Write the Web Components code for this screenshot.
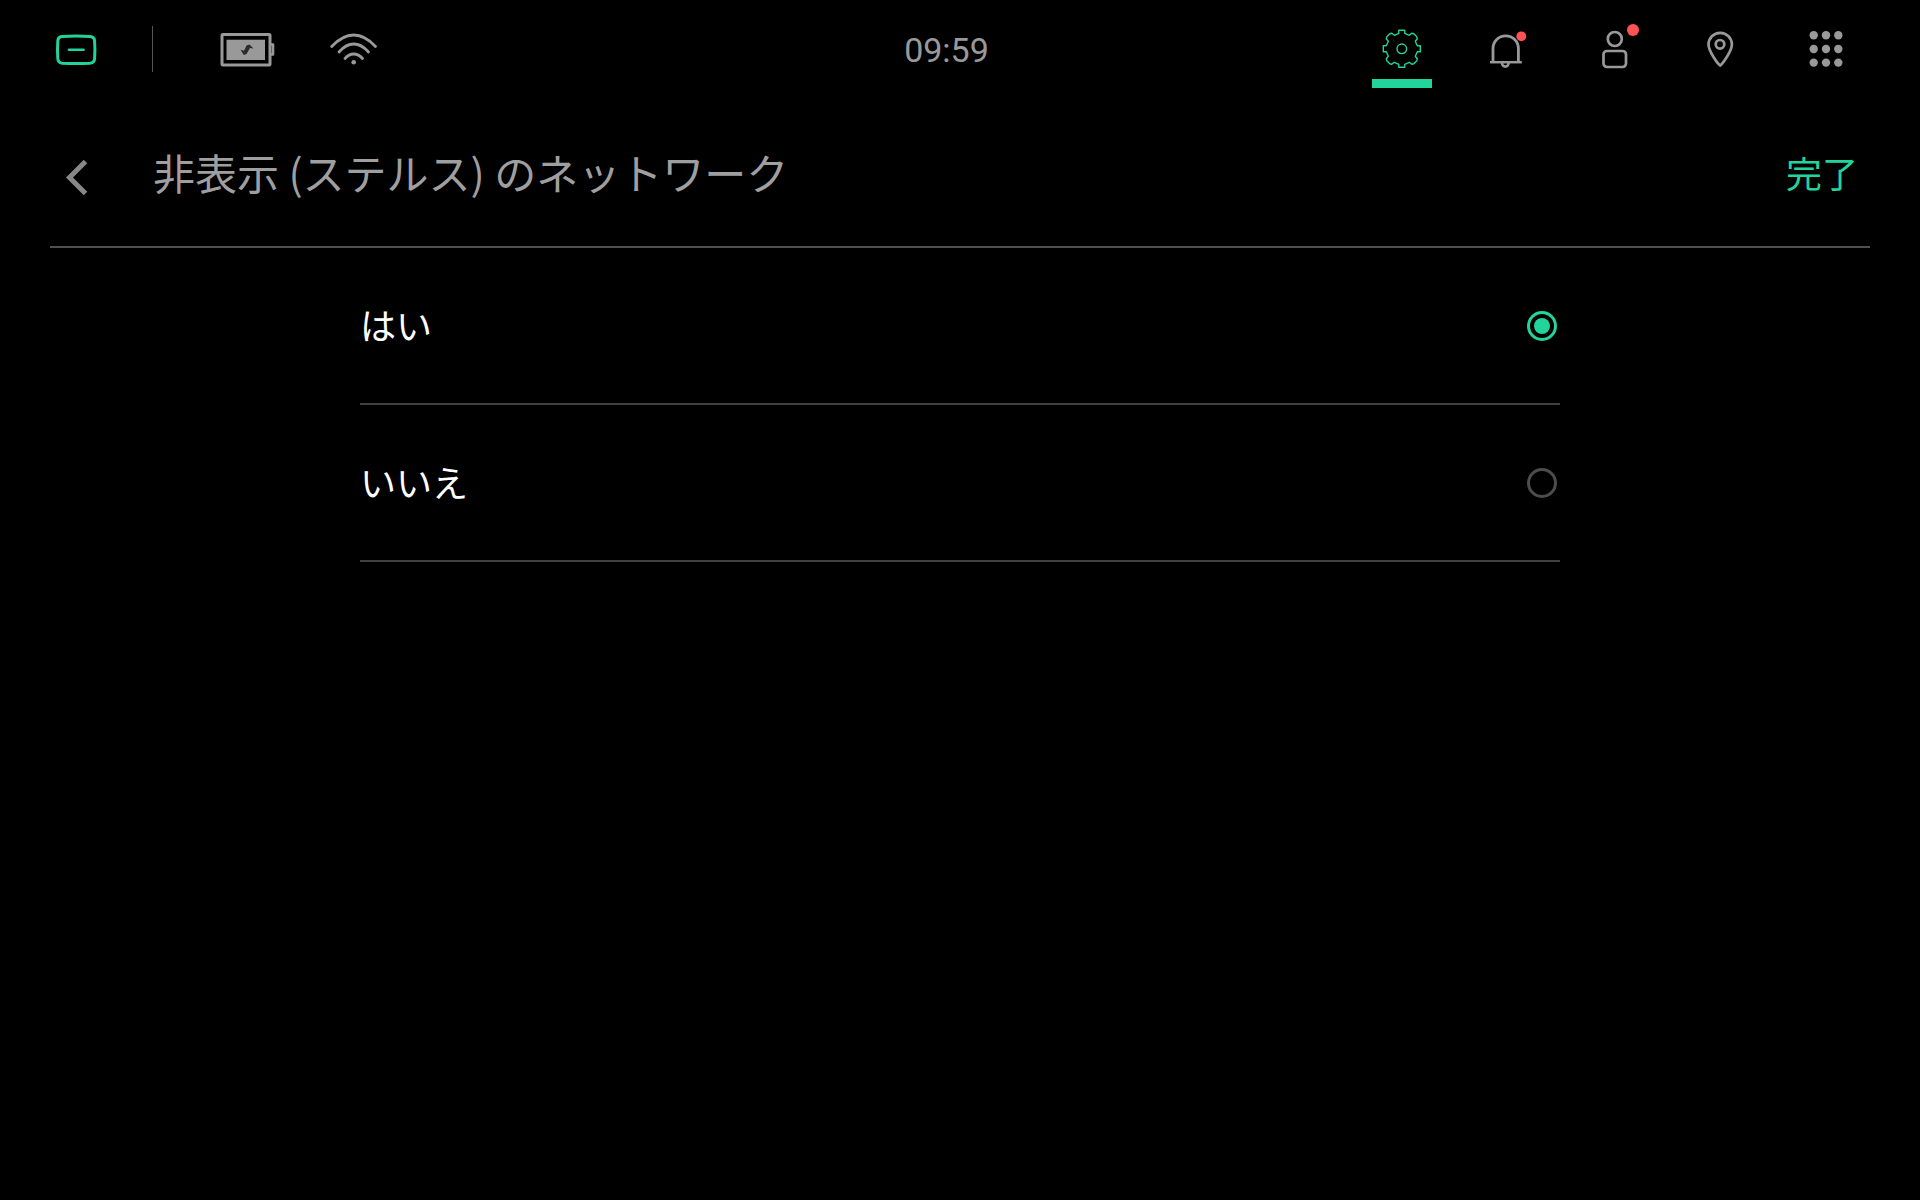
<!DOCTYPE html>
<html lang="ja">
<head>
<meta charset="utf-8">
<title>非表示 (ステルス) のネットワーク</title>
<style>
  html { background: #000; }
  body {
    margin: 0;
    background: #000;
    color: #fff;
    font-family: "Noto Sans CJK JP", sans-serif;
    --accent: #22d39c;
    --muted: #999;
    --alert: #ff5252;
  }
</style>
</head>
<body>
<settings-page></settings-page>

<script>
const define = (name, html, setup) => {
  const template = document.createElement('template');
  template.innerHTML = html;
  customElements.define(name, class extends HTMLElement {
    constructor() {
      super();
      this.attachShadow({ mode: 'open' }).append(template.content.cloneNode(true));
    }
    connectedCallback() { if (setup) setup(this, this.shadowRoot); }
  });
};

/* Icons share a canvas whose origin is the centre of the bar. */
const ICONS = {
  home: `<path d="M-14-13.500Q0-14.300 14-13.500Q18.500-13 18.600-9Q19.200 0 18.600 8.500Q18.500 12.800 14 13.200Q0 13.800-14 13.200Q-18 12.800-18.200 8.500Q-18.800 0-18.200-9Q-18.100-13-14-13.500Z" stroke-width="3"/><path d="M-7-.2H7.500" stroke-width="2.600" stroke-linecap="round"/>`,
  battery: `<rect x="-25" y="-15.500" width="48" height="30.500" rx="1" stroke-width="3"/><path d="M23-5.500H26V4.500H23" stroke-width="2.600" stroke-linejoin="round"/><rect x="-20.500" y="-10.300" width="38.500" height="20.300" fill="currentColor" stroke="none"/><path d="M-6.500 -.2L-3 .8L-.5-4.500L2.500-5.500L6.500-1.500L3-2L-.5 4L-3.200 5Z" fill="#2b2b2b" stroke="none"/>`,
  wifi: `<g stroke-width="2.800" stroke-linecap="round"><path d="M-21.300-3.500Q-10.500-15 .7-15Q12-15 22.500-3.500"/><path d="M-14 2Q-7-6 .7-6Q8.500-6 15.500 2"/><path d="M-8 8.500Q-4 4 .7 4Q5.500 4 9.500 8.500"/></g><circle cx=".7" cy="12.300" r="2.300" fill="currentColor" stroke="none"/>`,
  settings: `<g transform="translate(-.2 -1.200)" stroke-width="1.400" stroke-linejoin="round"><path d="M3-18.500V-15.500L7.500-13.500L10-15.500L12-15L15-12L15.500-10L13.500-7.500L15.500-3H18.500V3H15.500L13.500 7.500L15.500 10L15 12L12 15L10 15.500L7.500 13.500L3 15.500V18.500H-3V15.500L-7.500 13.500L-10 15.500L-12 15L-15 12L-15.500 10L-13.500 7.500L-15.500 3H-18.500V-3H-15.500L-13.500-7.500L-15.500-10L-15-12L-12-15L-10-15.500L-7.500-13.500L-3-15.500V-18.500Z"/><circle r="4.800"/></g>`,
  bell: `<path d="M-15 12V-1.500A12.700 12.700 0 0 1 10.400-1.500V12" stroke-width="2.800"/><path d="M-18 12.200H13.800" stroke-width="2.500"/><path d="M-6 13A3.300 3.600 0 0 0 .6 13" stroke-width="2.600"/><circle cx="13.300" cy="-13.700" r="4.900" fill="var(--alert)" stroke="none"/>`,
  profile: `<circle cx=".8" cy="-11" r="7" stroke-width="2.700"/><rect x="-10.500" y="1" width="22.500" height="16" rx="3.500" stroke-width="2.700"/><circle cx="19" cy="-20" r="6" fill="var(--alert)" stroke="none"/>`,
  location: `<path d="M.2 15.500C-2.500 13.500-11.500 1-11.500-5.500A11.700 11.700 0 0 1 11.900-5.500C11.900 1 2.700 13.500 .2 15.500Z" stroke-width="2.700"/><circle cy="-5.700" r="4.300" stroke-width="2.700"/>`,
  apps: [-14.7, -1, 12.6].map(y => [-12.3, 0, 12.3].map(x =>
    `<circle cx="${x}" cy="${y}" r="4.200" fill="currentColor" stroke="none"/>`).join('')).join('')
};

define('bar-icon', `
  <style>
    :host { display: block; width: 60px; height: 100px; }
    svg { display: block; width: 100%; height: 100%; fill: none; stroke: currentColor; }
  </style>
  <svg viewBox="-30 -50 60 100" aria-hidden="true"></svg>`,
  (el, root) => { root.querySelector('svg').innerHTML = ICONS[el.getAttribute('name')]; });

define('bar-button', `
  <style>
    :host { display: block; color: var(--muted); }
    :host([active]) { color: var(--accent); }
    button {
      display: block; position: relative; margin: 0; padding: 0;
      border: 0; background: none; color: inherit; cursor: pointer;
    }
    :host([active]) button::after {
      content: ""; position: absolute; left: 0; right: 0; bottom: 12px;
      height: 9px; background: var(--accent);
    }
  </style>
  <button type="button"><slot></slot></button>`,
  (el, root) => root.querySelector('button').setAttribute('aria-label', el.getAttribute('label')));

define('status-bar', `
  <style>
    :host {
      display: grid; grid-template-columns: 1fr auto 1fr; align-items: center;
      height: 100px; padding: 0 64px 0 37px; color: var(--muted);
    }
    .start { display: flex; align-items: center; }
    .home { padding: 0 46px 0 9px; }
    .home bar-button { color: var(--accent); }
    .rule { width: 1px; height: 46px; margin-bottom: 2px; background: #555; }
    .status, nav { display: flex; align-items: center; gap: 46px; }
    .status { padding-left: 64px; }
    nav { justify-content: flex-end; }
    time { font-family: Roboto, sans-serif; font-size: 34px; line-height: 40px; }
  </style>
  <div class="start">
    <div class="home"><bar-button label="ホーム"><bar-icon name="home"></bar-icon></bar-button></div>
    <div class="rule"></div>
    <div class="status"><bar-icon name="battery"></bar-icon><bar-icon name="wifi"></bar-icon></div>
  </div>
  <time>09:59</time>
  <nav>
    <bar-button active label="設定"><bar-icon name="settings"></bar-icon></bar-button>
    <bar-button label="通知"><bar-icon name="bell"></bar-icon></bar-button>
    <bar-button label="プロフィール"><bar-icon name="profile"></bar-icon></bar-button>
    <bar-button label="位置情報"><bar-icon name="location"></bar-icon></bar-button>
    <bar-button label="アプリ"><bar-icon name="apps"></bar-icon></bar-button>
  </nav>`);

define('page-header', `
  <style>
    :host {
      display: flex; align-items: center; box-sizing: border-box;
      height: 148px; margin: 0 50px; padding: 0 12px 2px; border-bottom: 2px solid #505050;
    }
    button { margin: 0; padding: 0; border: 0; background: none; font: inherit; cursor: pointer; }
    .back { display: flex; color: #888; padding-top: 12px; }
    .back svg { display: block; width: 30px; height: 40px; fill: none; stroke: currentColor; stroke-width: 5; }
    h1 {
      flex: 1; margin: 0; padding-left: 61px;
      color: #9f9f9f; font-size: 42px; line-height: 60px; font-weight: 400;
    }
    .done { color: var(--accent); font-size: 36px; line-height: 60px; }
  </style>
  <button class="back" type="button" aria-label="戻る">
    <svg viewBox="0 0 30 40" aria-hidden="true"><path d="M23.500 3.500L7.500 19.500L23.500 35.500"/></svg>
  </button>
  <h1><slot></slot></h1>
  <button class="done" type="button">完了</button>`);

define('radio-option', `
  <style>
    :host { display: block; border-bottom: 2px solid #404040; }
    label {
      display: flex; align-items: center; justify-content: space-between;
      height: 155px; padding-right: 3px; font-size: 36px; line-height: 54px; cursor: pointer;
    }
    span { padding-bottom: 4px; }
    input {
      appearance: none; box-sizing: border-box; width: 30px; height: 30px; margin: 0;
      display: grid; place-items: center;
      border: 3px solid #4d4d4d; border-radius: 50%; cursor: pointer;
    }
    input:checked { border-color: var(--accent); }
    input:checked::before {
      content: ""; width: 16px; height: 16px; border-radius: 50%; background: var(--accent);
    }
  </style>
  <label for="choice"><span><slot></slot></span><input type="radio" id="choice" name="hidden-network"></label>`,
  (el, root) => {
    const input = root.querySelector('input');
    input.checked = el.hasAttribute('checked');
    input.addEventListener('change', () => {
      for (const other of el.parentNode.querySelectorAll('radio-option')) {
        if (other !== el) other.shadowRoot.querySelector('input').checked = false;
      }
    });
  });

define('option-list', `
  <style>
    :host { display: block; width: 62.5%; margin: 0 auto; }
  </style>
  <slot></slot>`,
  el => el.setAttribute('role', 'radiogroup'));

define('settings-page', `
  <style>
    :host { display: block; min-height: 100vh; }
  </style>
  <status-bar></status-bar>
  <main>
    <page-header>非表示 (ステルス) のネットワーク</page-header>
    <option-list aria-label="非表示 (ステルス) のネットワーク">
      <radio-option checked>はい</radio-option>
      <radio-option>いいえ</radio-option>
    </option-list>
  </main>`);
</script>
</body>
</html>
